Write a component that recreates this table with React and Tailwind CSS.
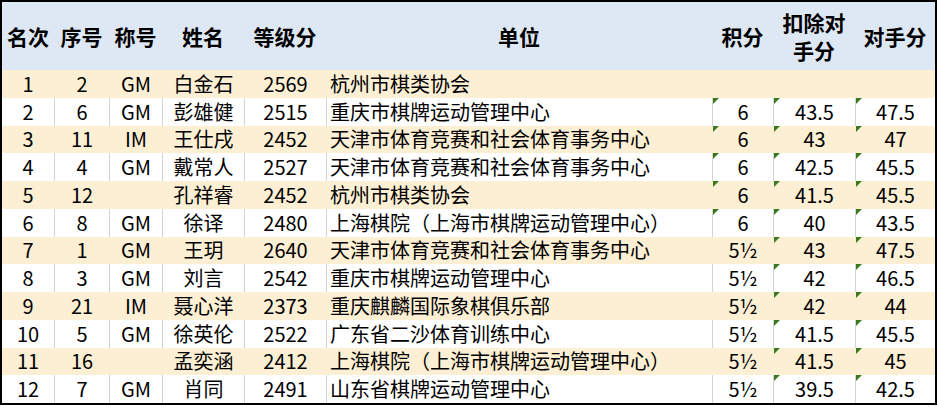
import React from "react";

const rows = [
    ["1", "2", "GM", "白金石", "2569", "杭州市棋类协会", "", "", ""],
    ["2", "6", "GM", "彭雄健", "2515", "重庆市棋牌运动管理中心", "6", "43.5", "47.5"],
    ["3", "11", "IM", "王仕戌", "2452", "天津市体育竞赛和社会体育事务中心", "6", "43", "47"],
    ["4", "4", "GM", "戴常人", "2527", "天津市体育竞赛和社会体育事务中心", "6", "42.5", "45.5"],
    ["5", "12", "", "孔祥睿", "2452", "杭州市棋类协会", "6", "41.5", "45.5"],
    ["6", "8", "GM", "徐译", "2480", "上海棋院（上海市棋牌运动管理中心）", "6", "40", "43.5"],
    ["7", "1", "GM", "王玥", "2640", "天津市体育竞赛和社会体育事务中心", "5½", "43", "47.5"],
    ["8", "3", "GM", "刘言", "2542", "重庆市棋牌运动管理中心", "5½", "42", "46.5"],
    ["9", "21", "IM", "聂心洋", "2373", "重庆麒麟国际象棋俱乐部", "5½", "42", "44"],
    ["10", "5", "GM", "徐英伦", "2522", "广东省二沙体育训练中心", "5½", "41.5", "45.5"],
    ["11", "16", "", "孟奕涵", "2412", "上海棋院（上海市棋牌运动管理中心）", "5½", "41.5", "45"],
    ["12", "7", "GM", "肖同", "2491", "山东省棋牌运动管理中心", "5½", "39.5", "42.5"],
];

const headers = ["名次", "序号", "称号", "姓名", "等级分", "单位", "积分", "扣除对\n手分", "对手分"];

const cols = "grid grid-cols-[52px_55px_53px_82px_82px_386px_61px_82px_80px]";

// Excel-style green "number stored as text" marker
const Flag = () => (
    <span className="absolute left-0 top-0 w-0 h-0 border-t-[6px] border-r-[6px] border-t-[#3a7a1e] border-r-transparent" />
);

const App = () => {
    return (
        <div
            className="w-[937px] h-[405px] border-2 border-black bg-white text-black"
            style={{ fontFamily: '"Noto Sans CJK SC", "Noto Sans", sans-serif' }}
        >
            {/* header */}
            <div className={`${cols} h-[68px] bg-[#dee8f4]`}>
                {headers.map((h, i) => (
                    <div
                        key={i}
                        className="flex items-center justify-center text-center whitespace-pre-line font-bold text-[21px] leading-[28px]"
                    >
                        {h}
                    </div>
                ))}
            </div>

            {/* body rows */}
            {rows.map((r, ri) => {
                const cream = ri % 2 === 0;
                const line = cream ? "border-transparent" : "border-[#d4d4d4]";
                return (
                    <div key={ri} className={`${cols} h-[27.75px] ${cream ? "bg-[#fcefd3]" : "bg-white"}`}>
                        {r.map((c, ci) => {
                            const flag =
                                ri > 0 && (ci === 7 || ci === 8 || (ci === 6 && c === "6"));
                            return (
                                <div
                                    key={ci}
                                    className={`relative flex items-center text-[20px] leading-none whitespace-nowrap ${ci > 0 ? `border-l ${line}` : ""} ${ci === 5 ? "justify-start pl-[3px]" : "justify-center"}`}
                                >
                                    {flag && <Flag />}
                                    {c}
                                </div>
                            );
                        })}
                    </div>
                );
            })}
        </div>
    );
};

export default App;
